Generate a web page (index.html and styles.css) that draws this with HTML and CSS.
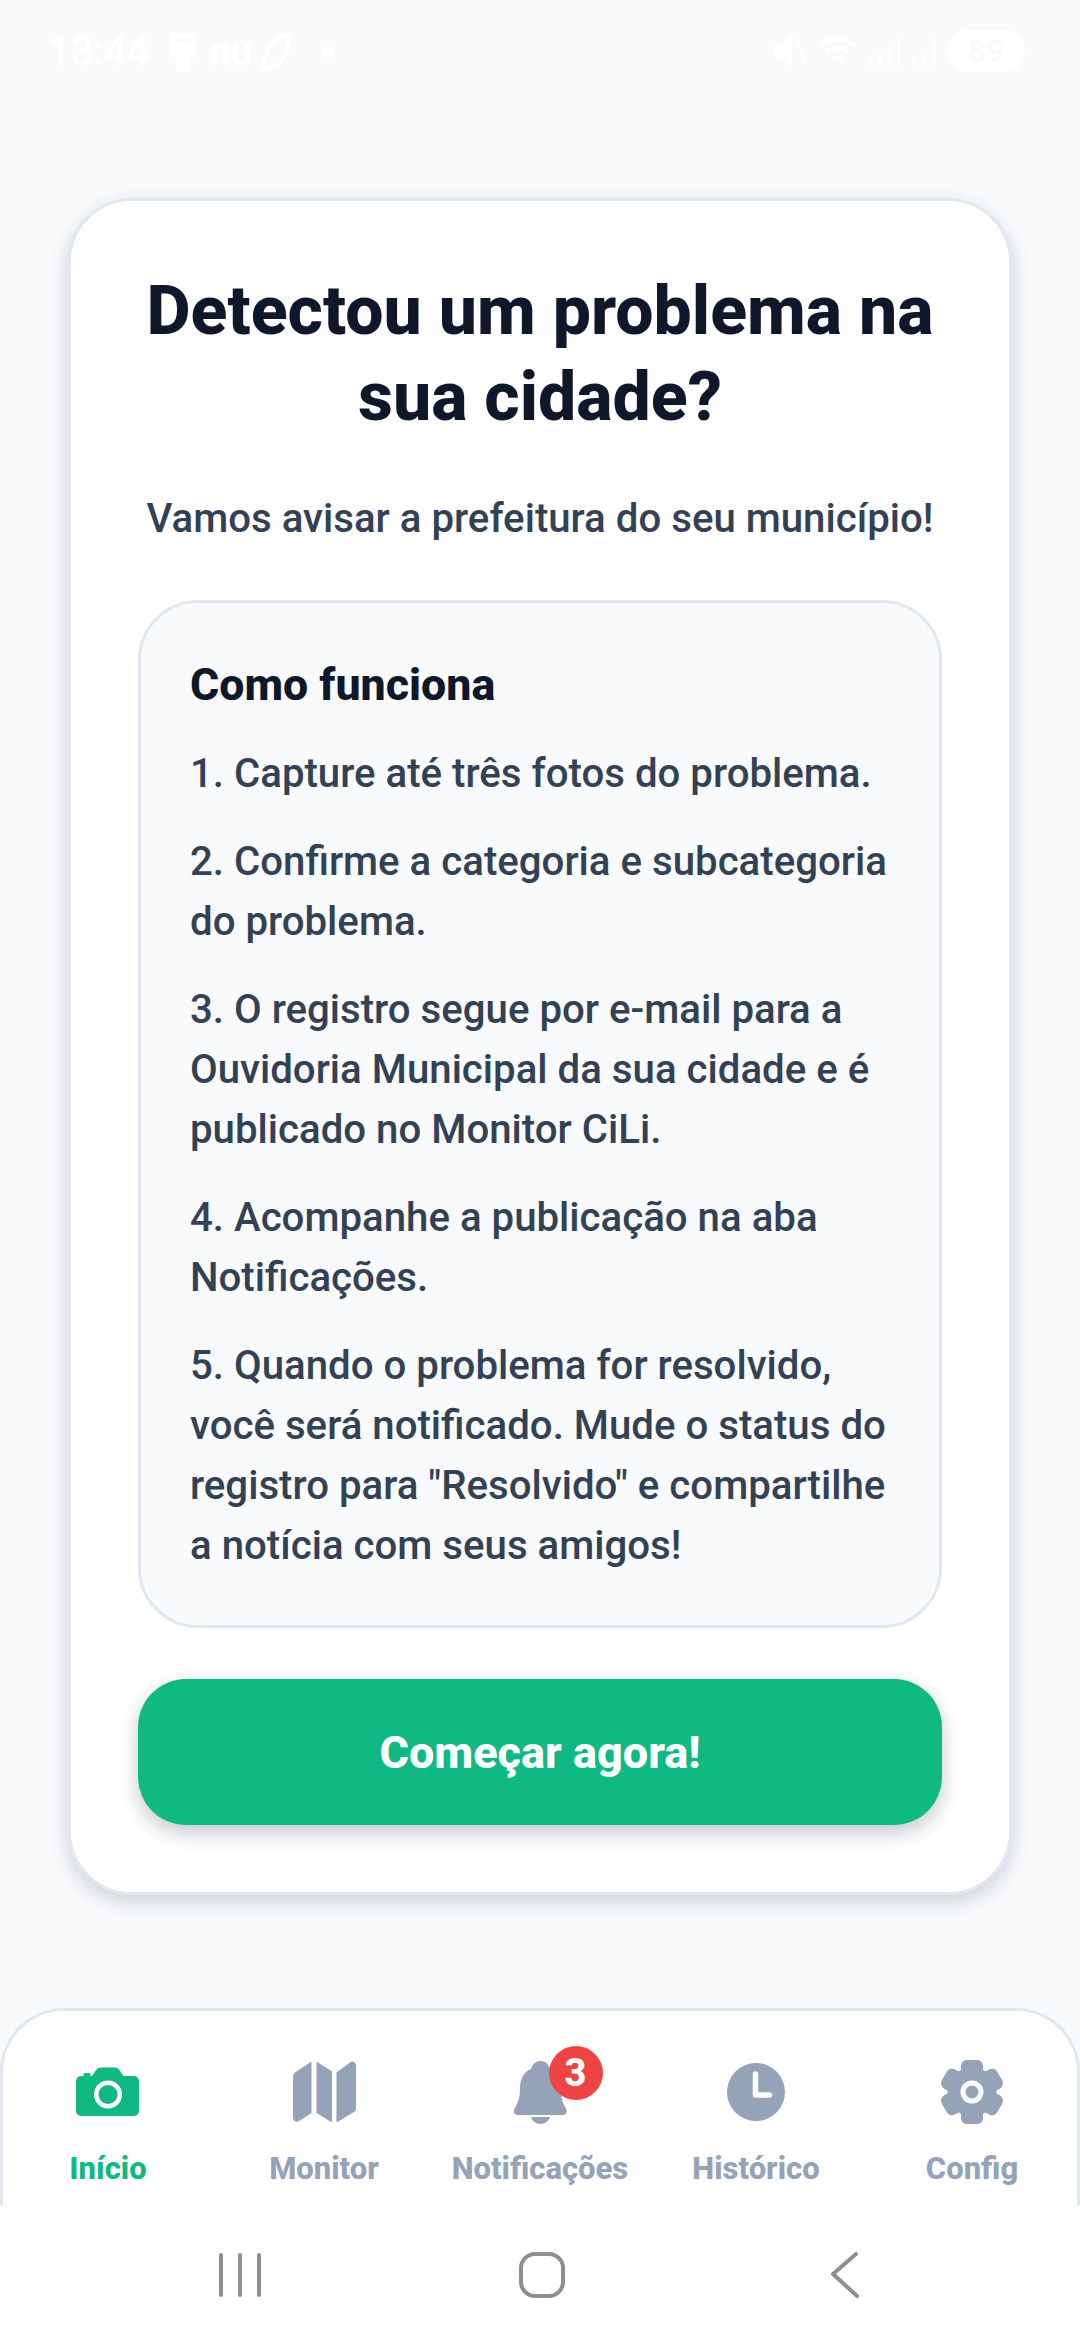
FILE: index.html
```html
<!DOCTYPE html>
<html lang="pt-BR">
<head>
<meta charset="utf-8">
<title>CiLi</title>
<link rel="stylesheet" href="styles.css">
</head>
<body>
<div class="screen">
  <header class="status">
    <div class="status-left">
      <span class="time">13:44</span>
      <svg class="st-ic" width="36" height="44" viewBox="0 0 36 44"><path d="M5 3h26v24h-5V8H10v19H5z M11 12h14v30H11z" fill="#fff"/></svg>
      <span class="nu">nu</span>
      <svg class="st-ic" width="34" height="40" viewBox="0 0 34 40"><path d="M30 3C16 5 5 14 3 34l3 3c2-2 4-3 7-3 9-1 15-12 17-31z" fill="none" stroke="#fff" stroke-width="4"/></svg>
      <span class="dot"></span>
    </div>
    <div class="status-right">
      <svg class="st-ic" width="34" height="34" viewBox="0 0 34 34"><path d="M3 12h6l9-9v28l-9-9H3z M24 3l8 28" fill="#fff" stroke="#fff" stroke-width="2"/></svg>
      <svg class="st-ic" width="40" height="36" viewBox="0 0 40 36"><path d="M3 13a24 24 0 0 1 34 0M9 20a16 16 0 0 1 22 0M15 27a8 8 0 0 1 10 0" fill="none" stroke="#fff" stroke-width="4"/></svg>
      <svg class="st-ic" width="34" height="32" viewBox="0 0 34 32"><path d="M3 31v-8M13 31V19M23 31V10M32 31V2" stroke="#fff" stroke-width="3"/></svg>
      <svg class="st-ic" width="26" height="32" viewBox="0 0 26 32"><path d="M3 31v-8M13 31V19M23 31V2" stroke="#fff" stroke-width="3"/></svg>
      <span class="battery">89</span>
    </div>
  </header>

  <main class="content">
    <section class="card">
      <h1 class="title">Detectou um problema na sua cidade?</h1>
      <p class="lead">Vamos avisar a prefeitura do seu município!</p>
      <div class="howto">
        <h2 class="howto-title">Como funciona</h2>
        <p class="step">1. Capture até três fotos do problema.</p>
        <p class="step">2. Confirme a categoria e subcategoria do problema.</p>
        <p class="step">3. O registro segue por e-mail para a Ouvidoria Municipal da sua cidade e é publicado no Monitor CiLi.</p>
        <p class="step">4. Acompanhe a publicação na aba Notificações.</p>
        <p class="step">5. Quando o problema for resolvido, você será notificado. Mude o status do registro para "Resolvido" e compartilhe a notícia com seus amigos!</p>
      </div>
      <button class="cta">Começar agora!</button>
    </section>
  </main>

  <nav class="tabs">
    <div class="tab active">
      <div class="tab-icon">
        <svg width="64" height="50" viewBox="0 0 64 50"><path fill="#10b981" fill-rule="evenodd" d="M5 9h2.500V7.500A1.500 1.500 0 0 1 9 6h4a1.500 1.500 0 0 1 1.500 1.500V9H16l4.500-6.500A5 5 0 0 1 24.500.5h14.500a5 5 0 0 1 4 2L47.500 9H58a5 5 0 0 1 5 5v30a5 5 0 0 1-5 5H5a5 5 0 0 1-5-5V14a5 5 0 0 1 5-5zM32 13.500a14 14 0 1 0 0 28 14 14 0 0 0 0-28zM32 18a9.500 9.500 0 1 1 0 19 9.500 9.500 0 0 1 0-19z"/></svg>
      </div>
      <span class="tab-label">Início</span>
    </div>
    <div class="tab">
      <div class="tab-icon">
        <svg width="63" height="62" viewBox="0 0 63 62"><path fill="#94a3b8" d="M18.500.5V52L6 60c-3 2-6 0-6-4V16c0-2 .7-3.500 2-4.500zM23.500.5L39 10.500V61.500L23.500 52zM43.500 11.500L57 1.500c3-2 6-.5 6 3.500v42c0 2-.7 3-2 4L43.500 61.500z"/></svg>
      </div>
      <span class="tab-label">Monitor</span>
    </div>
    <div class="tab">
      <div class="tab-icon">
        <svg width="53" height="63" viewBox="0 0 53 63"><path fill="#94a3b8" d="M26.500 0c5 0 8 3 9.500 8 8 3 11 11 11 20 0 9 2 15 5 19.500 1.500 2.500.5 6.500-3 6.500H3.500c-3.500 0-4.500-4-3-6.500C3.500 43 6 37 6 28c0-9 3-17 11-20C18.500 3 21.500 0 26.500 0z"/><path fill="#94a3b8" d="M17 56h19c-1 4-5 7-9.500 7S18 60 17 56z"/></svg>
        <span class="badge">3</span>
      </div>
      <span class="tab-label">Notificações</span>
    </div>
    <div class="tab">
      <div class="tab-icon">
        <svg width="58" height="58" viewBox="0 0 58 58"><circle cx="29" cy="29" r="29" fill="#94a3b8"/><path d="M28.500 11v21h14" fill="none" stroke="#fff" stroke-width="5.500" stroke-linecap="round" stroke-linejoin="round"/></svg>
      </div>
      <span class="tab-label">Histórico</span>
    </div>
    <div class="tab">
      <div class="tab-icon">
        <svg width="64" height="64" viewBox="0 0 64 64"><g fill="#94a3b8"><circle cx="32" cy="32" r="24.500"/><rect x="21" y="0" width="22" height="64" rx="6"/><rect x="21" y="0" width="22" height="64" rx="6" transform="rotate(60 32 32)"/><rect x="21" y="0" width="22" height="64" rx="6" transform="rotate(120 32 32)"/></g><circle cx="32" cy="32" r="9" fill="none" stroke="#fff" stroke-width="5"/></svg>
      </div>
      <span class="tab-label">Config</span>
    </div>
  </nav>

  <footer class="sysnav">
    <svg class="sys-ic" width="42" height="44" viewBox="0 0 42 44"><path d="M2 2v40M21 2v40M40 2v40" stroke="#8e8e8e" stroke-width="4" stroke-linecap="round"/></svg>
    <svg class="sys-ic" width="46" height="46" viewBox="0 0 46 46"><rect x="2" y="2" width="42" height="42" rx="14" fill="none" stroke="#8e8e8e" stroke-width="4"/></svg>
    <svg class="sys-ic" width="28" height="46" viewBox="0 0 28 46"><path d="M25 2L2 22l24 22" fill="none" stroke="#8e8e8e" stroke-width="4" stroke-linecap="round" stroke-linejoin="round"/></svg>
  </footer>
</div>
</body>
</html>
```

FILE: styles.css
```css
* { box-sizing: border-box; }
html, body { margin: 0; padding: 0; }
body { font-family: Roboto, "Noto Sans", sans-serif; background: #f8fafc; }
.screen { width: 1080px; height: 2340px; display: flex; flex-direction: column; background: #f8fafc; overflow: hidden; }

.status { height: 100px; padding: 30px 55px 0 48px; display: flex; justify-content: space-between; align-items: flex-start; color: #fff; }
.status-left, .status-right { display: flex; align-items: center; gap: 8px; }
.status-right { gap: 10px; }
.time { font-size: 40px; font-weight: 500; line-height: 44px; margin-right: 8px; }
.nu { font-size: 38px; font-weight: 700; line-height: 44px; }
.dot { width: 12px; height: 12px; border-radius: 50%; background: #fff; margin-left: 20px; }
.battery { width: 78px; height: 42px; border-radius: 21px; background: #fff; color: #f8fafc; font-size: 32px; font-weight: 700; line-height: 42px; text-align: center; }
.st-ic { display: block; }

.content { flex: 1; padding: 98px 68px 0; }
.card { background: #fff; border: 3px solid #e2e8f0; border-radius: 64px; padding: 67px 67px 67px; box-shadow: 0 7px 20px rgba(15, 23, 42, 0.18); }
.title { margin: 0; font-size: 68px; font-weight: 800; line-height: 86px; text-align: center; color: #0f172a; }
.lead { margin: 49px 0 0; font-size: 40.2px; font-weight: 500; line-height: 60px; text-align: center; color: #334155; }
.howto { margin-top: 51px; background: #f8fafc; border: 3px solid #e2e8f0; border-radius: 60px; padding: 57px 49px 49px; }
.howto-title { margin: 0 0 34px; font-size: 44.7px; font-weight: 800; line-height: 50px; color: #0f172a; }
.step { margin: 0 0 28px; font-size: 40.2px; font-weight: 500; line-height: 60px; color: #334155; }
.step:last-child { margin-bottom: 0; }
.cta { display: block; width: 100%; height: 146px; margin-top: 51px; border: 0; border-radius: 48px; background: #10b981; color: #fff; font-family: inherit; font-size: 45px; font-weight: 800; box-shadow: 0 8px 20px rgba(15, 23, 42, 0.24); }

.tabs { height: 198px; display: grid; grid-template-columns: repeat(5, 216px); justify-content: center; background: #fff; border: 3px solid #e2e8f0; border-bottom: 0; border-radius: 64px 64px 0 0; padding-top: 43px; }
.tab { display: flex; flex-direction: column; align-items: center; color: #94a3b8; }
.tab.active { color: #10b981; }
.tab-icon { position: relative; height: 76px; display: flex; align-items: center; justify-content: center; }
.tab-label { font-size: 31px; font-weight: 800; line-height: 36px; margin-top: 21px; white-space: nowrap; }
.badge { position: absolute; left: 35px; top: -8px; width: 54px; height: 54px; border-radius: 50%; background: #ef4444; color: #fff; font-size: 38px; font-weight: 800; line-height: 54px; text-align: center; }

.sysnav { height: 134px; background: #fff; display: grid; grid-template-columns: 300px 312px auto; justify-content: start; padding-left: 219px; align-items: center; }
.sys-ic { display: block; margin-top: 4px; }
```
